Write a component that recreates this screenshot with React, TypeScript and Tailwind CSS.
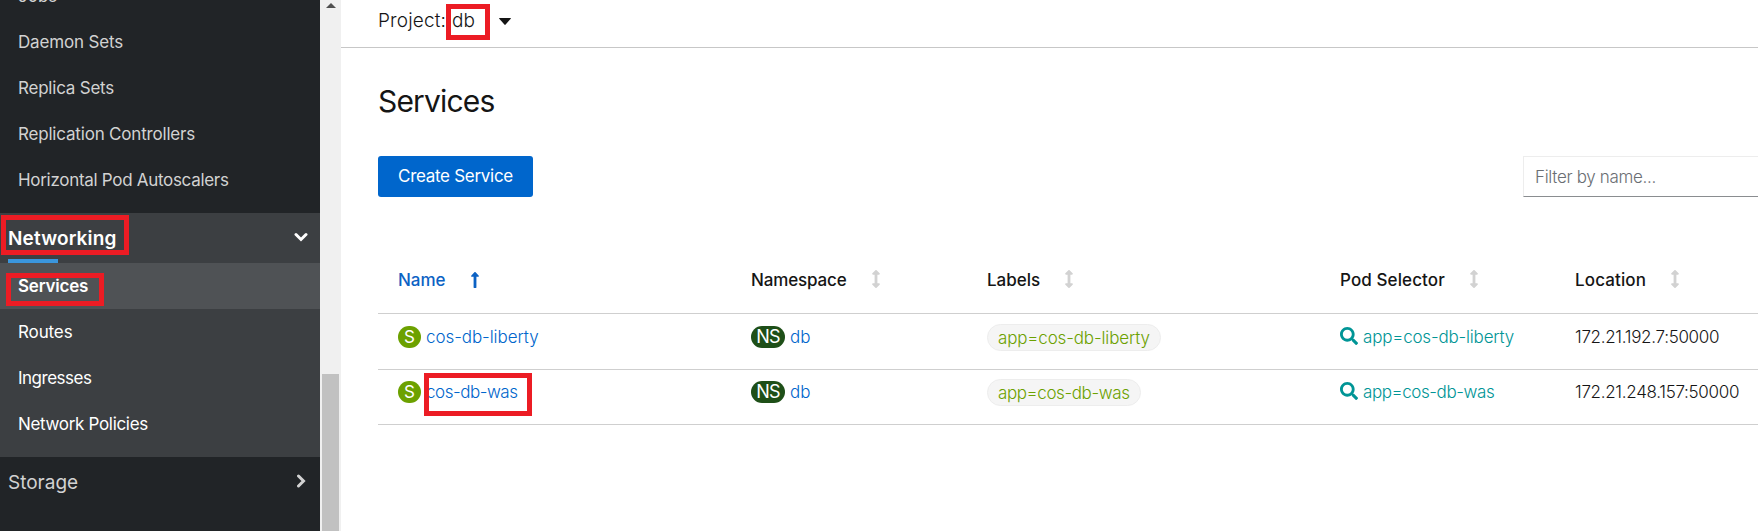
import type { ReactNode } from "react";
import { FaSearch, FaLongArrowAltUp, FaArrowsAltV } from "react-icons/fa";

function NavItem({ label, className }: { label: string; className: string }) {
  return <a className={`flex h-[46px] shrink-0 items-center pt-[2px] pl-[18px] text-[17px] ${className}`}>{label}</a>;
}

function Highlight({ className }: { className: string }) {
  return <span className={`pointer-events-none absolute border-5 border-[#ec1c24] ${className}`} />;
}

function Chevron({ className }: { className: string }) {
  return (
    <svg width="14" height="14" viewBox="0 0 14 14" fill="none" stroke="currentColor" strokeWidth="3" className={className}>
      <path d="M2 4.5 7 9.5 12 4.5" strokeLinecap="round" />
    </svg>
  );
}

function Sidebar() {
  return (
    <nav className="flex w-[320px] shrink-0 flex-col overflow-hidden bg-[#212427] text-[#d2d2d2]">
      <div className="-mt-[27px] flex flex-col pb-[10px]">
        <NavItem label="Jobs" className="" />
        <NavItem label="Daemon Sets" className="tracking-[-0.16px]" />
        <NavItem label="Replica Sets" className="tracking-[-0.22px]" />
        <NavItem label="Replication Controllers" className="tracking-[-0.19px]" />
        <NavItem label="Horizontal Pod Autoscalers" className="tracking-[-0.3px]" />
      </div>
      <div className="flex flex-col bg-[#3c3f42] pb-[10px] text-white">
        <div className="relative flex h-[50px] items-center justify-between pt-[2px] pr-[12px] pl-2 text-[19px] font-semibold tracking-[0.14px]">
          <span>Networking</span>
          <Chevron className="-mt-[4px]" />
          <span className="absolute bottom-0 left-2 h-1 w-[50px] bg-[#3a96dd]" />
          <Highlight className="top-[2px] left-px h-[40px] w-[128px]" />
        </div>
        <div className="relative bg-[#4f5255]">
          <NavItem label="Services" className="font-semibold tracking-[-0.22px]" />
          <Highlight className="top-[10px] left-[6px] h-[33px] w-[98px]" />
        </div>
        <NavItem label="Routes" className="tracking-[-0.12px]" />
        <NavItem label="Ingresses" className="tracking-[-0.5px]" />
        <NavItem label="Network Policies" className="tracking-[-0.32px]" />
      </div>
      <div className="flex h-[50px] items-center justify-between pt-[2px] pr-[12px] pl-2 text-[19px]">
        <span>Storage</span>
        <Chevron className="-mt-[4px] -rotate-90" />
      </div>
    </nav>
  );
}

function Scrollbar() {
  return (
    <div className="flex w-[21px] shrink-0 flex-col items-center bg-[#f0f0f0] pt-[3px]">
      <svg width="10" height="5" viewBox="0 0 10 5" className="fill-[#505050]">
        <path d="M5 0 10 5H0z" />
      </svg>
      <div className="mt-[366px] w-[17px] flex-1 bg-[#c1c1c1]" />
    </div>
  );
}

const cols = "grid grid-cols-[353px_236px_353px_235px_1fr] border-b border-[#cfcfcf] pl-5";

function Heading({ label, active, className }: { label: string; active?: boolean; className: string }) {
  return (
    <div className={`flex items-center text-[17px] font-medium ${active ? "text-[#0c62c4]" : "text-[#151515]"}`}>
      <span className={className}>{label}</span>
      {active ? (
        <FaLongArrowAltUp size={18} className="-mt-[2px] ml-[20px]" />
      ) : (
        <FaArrowsAltV size={18} className="-mt-[3px] ml-[20px] text-[#d2d2d2]" />
      )}
    </div>
  );
}

function Badge({ className, children }: { className: string; children: ReactNode }) {
  return (
    <span className={`flex h-[22px] items-center justify-center rounded-full font-normal text-white ${className}`}>
      {children}
    </span>
  );
}

type Service = {
  name: string;
  nameClass: string;
  selectorClass: string;
  labelClass: string;
  location: string;
  rowClass: string;
  marked?: boolean;
};

const services: Service[] = [
  {
    name: "cos-db-liberty",
    nameClass: "tracking-[-0.07px]",
    selectorClass: "tracking-[-0.19px]",
    labelClass: "w-[174px] tracking-[-0.15px]",
    location: "172.21.192.7:50000",
    rowClass: "h-[56px] pt-[10px]",
  },
  {
    name: "cos-db-was",
    nameClass: "tracking-[-0.47px]",
    selectorClass: "tracking-[-0.42px]",
    labelClass: "w-[154px] tracking-[-0.4px]",
    location: "172.21.248.157:50000",
    rowClass: "h-[55px] pt-[9px]",
    marked: true,
  },
];

function Row({ s }: { s: Service }) {
  return (
    <div className={`${cols} ${s.rowClass} items-start text-[17px] leading-[26px] font-light`}>
      <div className="relative flex items-center text-[#0066cc]">
        <Badge className="w-[23px] bg-[#6ca100] text-[17px]">S</Badge>
        <a className={`ml-[5px] ${s.nameClass}`}>{s.name}</a>
        {s.marked && <Highlight className="-top-[6px] left-[26px] h-[43px] w-[108px]" />}
      </div>
      <div className="flex items-center text-[#0066cc]">
        <Badge className="w-[34px] bg-[#1e4f18] text-[18px] tracking-[-0.7px]">NS</Badge>
        <a className="ml-[5px]">db</a>
      </div>
      <div className={`flex h-[27px] items-center rounded-full border border-[#ededed] bg-[#f5f5f5] pl-[10px] whitespace-nowrap text-[#6ca100] ${s.labelClass}`}>
        app={s.name}
      </div>
      <div className="flex items-center whitespace-nowrap text-[#009596]">
        <FaSearch size={18} className="-mt-[2px] shrink-0" />
        <a className={`ml-[5px] ${s.selectorClass}`}>app={s.name}</a>
      </div>
      <div className="tracking-[-0.3px] whitespace-nowrap text-[#151515]">{s.location}</div>
    </div>
  );
}

export default function App() {
  return (
    <div className="flex h-[531px] w-full overflow-hidden bg-white font-['Inter',sans-serif]">
      <Sidebar />
      <Scrollbar />
      <main className="flex min-w-0 flex-1 flex-col">
        <header className="relative flex h-[48px] items-center border-b border-[#c7c7c7] pb-[5px] pl-[37px] text-[19px] font-light text-[#151515]">
          <span className="w-[74px] tracking-[0.15px]">Project:</span>
          <span className="w-[47px]">db</span>
          <svg width="12" height="7" viewBox="0 0 12 7" fill="currentColor">
            <path d="M.6 0h10.8q.9 0 .3.8L6.6 6.6q-.6.6-1.2 0L.3.8Q-.3 0 .6 0z" />
          </svg>
          <Highlight className="top-1 left-[105px] h-[36px] w-[44px]" />
        </header>
        <div className="flex flex-col pl-[37px]">
          <h1 className="mt-[31px] h-[45px] text-[30px] leading-[44px] tracking-[-0.82px] text-[#151515]">Services</h1>
          <div className="mt-[32px] flex items-start justify-between">
            <button className="h-[41px] w-[155px] rounded-[3px] bg-[#0066cc] text-[17px] tracking-[-0.29px] text-white">
              Create Service
            </button>
            <input
              className="h-[41px] w-[235px] border-t border-b border-l border-[#ededed] border-b-[#8a8d90] pl-[11px] text-[17px] font-light tracking-[-0.32px] outline-none placeholder:text-[#6a6e73]"
              placeholder="Filter by name..."
            />
          </div>
          <div className="mt-[52px] flex flex-col">
            <div className={`${cols} h-[65px] items-start pt-[19px]`}>
              <Heading label="Name" active className="" />
              <Heading label="Namespace" className="tracking-[-0.15px]" />
              <Heading label="Labels" className="" />
              <Heading label="Pod Selector" className="tracking-[0.1px]" />
              <Heading label="Location" className="tracking-[0.13px]" />
            </div>
            {services.map((s) => (
              <Row key={s.name} s={s} />
            ))}
          </div>
        </div>
      </main>
    </div>
  );
}
